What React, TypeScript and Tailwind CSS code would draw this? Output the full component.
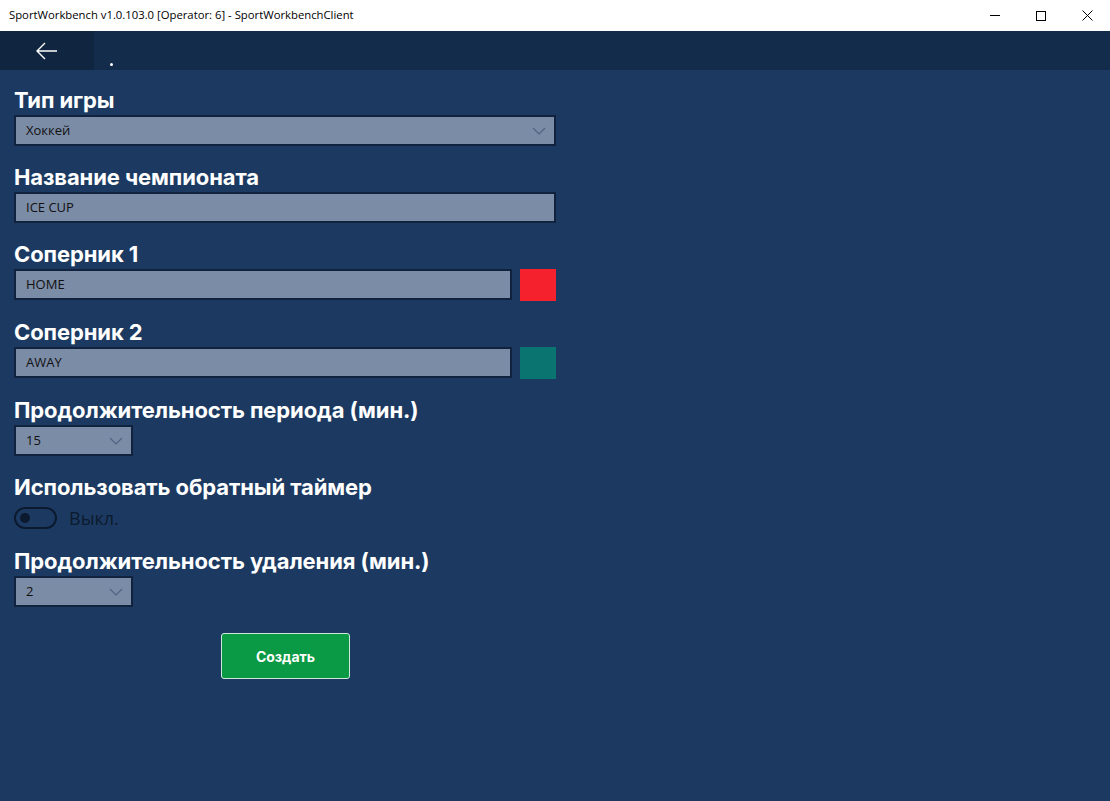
import React from 'react';

const labelCls = "text-[22px] leading-[26px] font-bold text-white tracking-[-0.1px] font-['Inter',sans-serif]";
const inputCls = "h-[31px] border-2 border-[#10223d] bg-[#7b8ca6] flex items-center pl-[10px] text-[13px] text-[#111] font-['Open_Sans',sans-serif]";

const Chevron: React.FC = () => (
  <svg width="14" height="8" viewBox="0 0 14 8" className="mr-[8px]">
    <polyline points="1,1 7,7 13,1" fill="none" stroke="#4f6382" strokeWidth="1.2" />
  </svg>
);

const Field: React.FC<{ label: string; children: React.ReactNode }> = ({ label, children }) => (
  <div className="flex flex-col">
    <div className={labelCls}>{label}</div>
    <div className="mt-[2px]">{children}</div>
  </div>
);

const TextBox: React.FC<{ value: string; className?: string }> = ({ value, className }) => (
  <div className={`${inputCls} ${className ?? ''}`}>{value}</div>
);

const Select: React.FC<{ value: string; width: string }> = ({ value, width }) => (
  <div className={`${inputCls} justify-between ${width}`}>
    <span>{value}</span>
    <Chevron />
  </div>
);

export default function App() {
  return (
    <div className="w-[1110px] h-[801px] flex flex-col bg-[#1c3a61] overflow-hidden">
      {/* window title bar */}
      <div className="h-[31px] bg-white flex items-center justify-between shrink-0">
        <span className="pl-[9px] text-[11.3px] text-black font-['Open_Sans',sans-serif]">
          SportWorkbench v1.0.103.0 [Operator: 6] - SportWorkbenchClient
        </span>
        <div className="flex h-full">
          <div className="w-[46px] h-full flex items-center justify-center">
            <div className="w-[10px] h-px bg-black" />
          </div>
          <div className="w-[46px] h-full flex items-center justify-center">
            <div className="w-[10px] h-[10px] border border-black" />
          </div>
          <div className="w-[46px] h-full flex items-center justify-center">
            <svg width="11" height="11" viewBox="0 0 11 11">
              <path d="M0.5 0.5 L10.5 10.5 M10.5 0.5 L0.5 10.5" stroke="#000" strokeWidth="1" />
            </svg>
          </div>
        </div>
      </div>

      {/* app nav bar */}
      <div className="h-[39px] bg-[#142c4c] flex shrink-0">
        <div className="w-[94px] h-full bg-[#10253f] flex items-center justify-center">
          <svg width="22" height="18" viewBox="0 0 22 18">
            <path d="M1 9 H21 M9 1 L1 9 L9 17" fill="none" stroke="#fff" strokeWidth="1.4" />
          </svg>
        </div>
        <div className="flex items-end pb-[4px] pl-[16px]">
          <div className="w-[3px] h-[3px] rounded-full bg-white" />
        </div>
      </div>

      {/* form */}
      <div className="flex flex-col gap-[18px] pl-[14px] pt-[17px]">
        <Field label="Тип игры">
          <Select value="Хоккей" width="w-[542px]" />
        </Field>
        <Field label="Название чемпионата">
          <TextBox value="ICE CUP" className="w-[542px]" />
        </Field>
        <Field label="Соперник 1">
          <div className="flex gap-[8px]">
            <TextBox value="HOME" className="w-[498px]" />
            <div className="w-[36px] h-[32px] bg-[#f5222d]" />
          </div>
        </Field>
        <Field label="Соперник 2">
          <div className="flex gap-[8px]">
            <TextBox value="AWAY" className="w-[498px]" />
            <div className="w-[36px] h-[32px] bg-[#0a7470]" />
          </div>
        </Field>
        <Field label="Продолжительность периода (мин.)">
          <Select value="15" width="w-[119px]" />
        </Field>
        <Field label="Использовать обратный таймер">
          <div className="flex items-center gap-[12px] mt-[4px] h-[24px]">
            <div className="w-[43px] h-[22px] rounded-full border-2 border-[#0b1a2f] flex items-center pl-[4px]">
              <div className="w-[10px] h-[10px] rounded-full bg-[#0b1a2f]" />
            </div>
            <span className="text-[18px] text-[#0b1a2f] font-['Open_Sans',sans-serif]">Выкл.</span>
          </div>
        </Field>
        <Field label="Продолжительность удаления (мин.)">
          <Select value="2" width="w-[119px]" />
        </Field>
        <div className="pl-[207px] pt-[8px]">
          <button className="w-[129px] h-[46px] bg-[#0a9a45] border border-[#cfe9d9] rounded-[3px] text-white text-[14px] font-bold font-['Inter',sans-serif]">
            Создать
          </button>
        </div>
      </div>
    </div>
  );
}
